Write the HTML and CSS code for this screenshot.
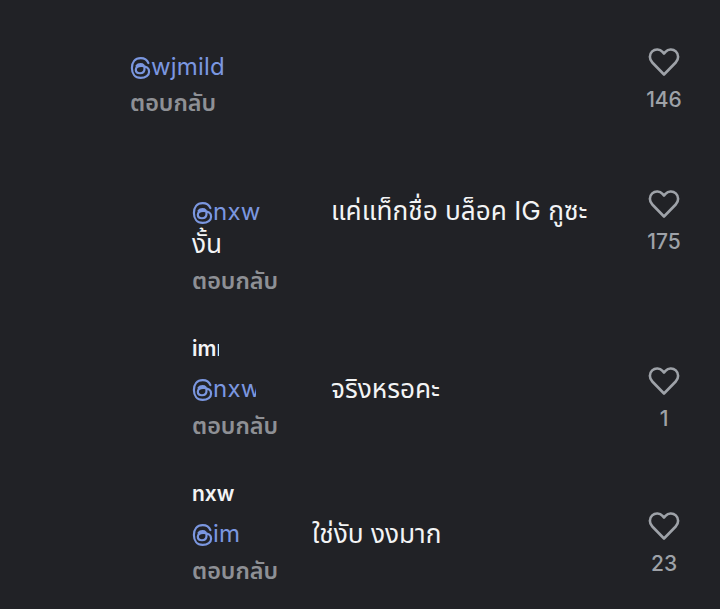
FILE: index.html

```html
<!DOCTYPE html>
<html lang="th">
<head>
  <meta charset="UTF-8" />
  <title>Replies</title>
  <meta name="viewport" content="width=device-width, initial-scale=1.0" />
  <link rel="stylesheet" href="styles.css">
</head>
<body>
  <svg class="defs" width="0" height="0">
    <symbol id="threads" viewBox="0 0 22 24">
      <path d="M19.300 6.800C18 3.400 15 1.600 11.200 1.600 5.200 1.600 2 6 2 12s3.200 10.400 9.200 10.400c5.200 0 8.800-2.800 8.800-6.500 0-3.900-3.300-6-8.200-6-3.500 0-5.700 1.700-5.700 4 0 2.200 1.900 3.600 4.300 3.600 3 0 4.800-1.900 4.800-4.800 0-3-1.700-4.800-4.300-4.800-1.800 0-3.100.7-4 2" fill="none" stroke="currentColor" stroke-width="2.300" stroke-linecap="round"/>
    </symbol>
    <symbol id="heart" viewBox="0 0 32 32">
      <path d="M16 28.500 4.300 16.500C1 13 1.200 8.200 4.200 5.400c3-2.800 7.600-2.500 10.300.5L16 7.500l1.500-1.600c2.700-3 7.300-3.300 10.300-.5 3 2.800 3.200 7.600-.1 11.100z" fill="none" stroke="currentColor" stroke-width="2.600" stroke-linejoin="round"/>
    </symbol>
  </svg>

  <div class="comment top">
    <div class="body">
      <div class="line">
        <a class="mention"><svg class="thr"><use href="#threads"/></svg>wjmild</a>
      </div>
      <div class="reply">ตอบกลับ</div>
    </div>
    <div class="like"><svg class="heart"><use href="#heart"/></svg><span>146</span></div>
  </div>

  <div class="replies">
    <div class="comment first">
      <div class="body">
        <div class="line wrap">
          <a class="mention m-wide"><svg class="thr"><use href="#threads"/></svg>nxw</a><span class="text">แค่แท็กชื่อ บล็อค IG กูซะ งั้น</span>
        </div>
        <div class="reply">ตอบกลับ</div>
      </div>
      <div class="like"><svg class="heart"><use href="#heart"/></svg><span>175</span></div>
    </div>

    <div class="comment named">
      <div class="body">
        <div class="name n-cut">imm</div>
        <div class="line">
          <a class="mention m-cut"><svg class="thr"><use href="#threads"/></svg>nxw</a><span class="text">จริงหรอคะ</span>
        </div>
        <div class="reply">ตอบกลับ</div>
      </div>
      <div class="like"><svg class="heart"><use href="#heart"/></svg><span>1</span></div>
    </div>

    <div class="comment named">
      <div class="body">
        <div class="name">nxw</div>
        <div class="line">
          <a class="mention m-im"><svg class="thr"><use href="#threads"/></svg>imm</a><span class="text">ใช่งับ งงมาก</span>
        </div>
        <div class="reply">ตอบกลับ</div>
      </div>
      <div class="like"><svg class="heart"><use href="#heart"/></svg><span>23</span></div>
    </div>
  </div>
</body>
</html>
```

FILE: styles.css

```css
* {
  box-sizing: border-box;
}

html, body {
  height: 100%;
}

body {
  background: #212226;
  font-family: Inter, "Noto Sans Thai", "Noto Sans", "Liberation Sans", sans-serif;
  color: #f3f4f5;
  margin: 0;
  padding: 46px 38px 0 130px;
  overflow: hidden;
}

.defs {
  position: absolute;
}

.comment {
  display: flex;
  justify-content: space-between;
}

.body {
  flex: 1;
}

.top .body {
  padding-top: 5px;
}

.first .body {
  padding-top: 7px;
}

.line {
  font-size: 24px;
  line-height: 32px;
  display: flex;
  white-space: nowrap;
}

.line.wrap {
  display: block;
  white-space: normal;
  width: 400px;
}

.text {
  font-size: 26.2px;
  line-height: 32px;
}

.mention {
  color: #7b97e0;
  display: inline-flex;
  align-items: center;
  overflow: hidden;
  vertical-align: bottom;
  letter-spacing: 0.2px;
}

.thr {
  width: 21px;
  height: 24px;
  flex: none;
  margin-top: 1px;
}

.m-wide {
  width: 139px;
}

.m-cut {
  width: 64px;
  margin-right: 75px;
}

.m-im {
  width: 49px;
  margin-right: 71px;
}

.reply {
  font-size: 23.4px;
  line-height: 28px;
  font-weight: 600;
  color: #8e9095;
  margin-top: 6px;
}

.named .reply {
  margin-top: 7px;
}

.name {
  font-size: 21px;
  line-height: 28px;
  font-weight: 600;
  margin-bottom: 10px;
}

.n-cut {
  width: 27px;
  overflow: hidden;
}

.like {
  width: 36px;
  display: flex;
  flex-direction: column;
  align-items: center;
  color: #9ea2a8;
  font-size: 21px;
  font-weight: 550;
  line-height: 28px;
}

.named .like {
  margin-top: 30px;
}

.heart {
  width: 32px;
  height: 32px;
  margin-bottom: 8px;
}

.replies {
  padding-left: 62px;
}

.first {
  margin-top: 71px;
}

.comment + .comment {
  margin-top: 40px;
}
```
